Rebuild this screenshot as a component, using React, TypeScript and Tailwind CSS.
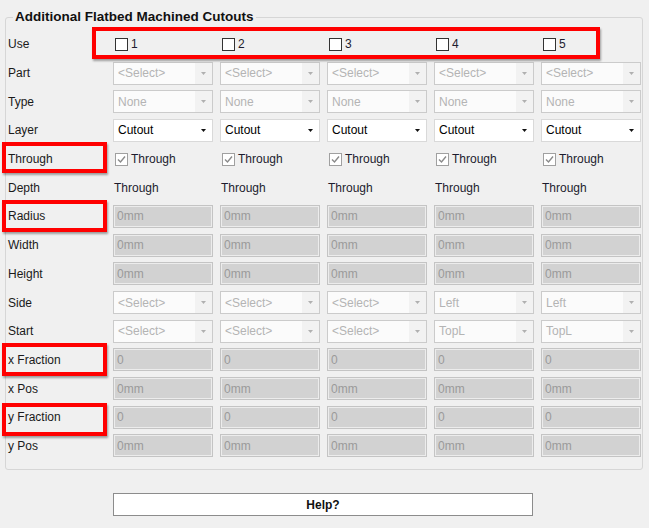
import React from "react";

type Cell =
  | { kind: "check"; text: string; checked?: boolean }
  | { kind: "combo"; text: string; enabled?: boolean }
  | { kind: "text"; text: string }
  | { kind: "box"; text: string };

type Row = { label: string; cells: Cell[] };

const five = (c: Cell): Cell[] => [c, c, c, c, c];

const rows: Row[] = [
  { label: "Use", cells: ["1", "2", "3", "4", "5"].map((n) => ({ kind: "check", text: n }) as Cell) },
  { label: "Part", cells: five({ kind: "combo", text: "<Select>" }) },
  { label: "Type", cells: five({ kind: "combo", text: "None" }) },
  { label: "Layer", cells: five({ kind: "combo", text: "Cutout", enabled: true }) },
  { label: "Through", cells: five({ kind: "check", text: "Through", checked: true }) },
  { label: "Depth", cells: five({ kind: "text", text: "Through" }) },
  { label: "Radius", cells: five({ kind: "box", text: "0mm" }) },
  { label: "Width", cells: five({ kind: "box", text: "0mm" }) },
  { label: "Height", cells: five({ kind: "box", text: "0mm" }) },
  {
    label: "Side",
    cells: ["<Select>", "<Select>", "<Select>", "Left", "Left"].map((t) => ({ kind: "combo", text: t }) as Cell),
  },
  {
    label: "Start",
    cells: ["<Select>", "<Select>", "<Select>", "TopL", "TopL"].map((t) => ({ kind: "combo", text: t }) as Cell),
  },
  { label: "x Fraction", cells: five({ kind: "box", text: "0" }) },
  { label: "x Pos", cells: five({ kind: "box", text: "0mm" }) },
  { label: "y Fraction", cells: five({ kind: "box", text: "0" }) },
  { label: "y Pos", cells: five({ kind: "box", text: "0mm" }) },
];

function CheckBox({ checked }: { checked?: boolean }) {
  return (
    <span
      className={`flex h-[13px] w-[13px] items-center justify-center border bg-white ${
        checked ? "border-[#a0a0a0]" : "border-[#333333]"
      }`}
    >
      {checked && (
        <svg width="9" height="9" viewBox="0 0 9 9">
          <path d="M1 4.5 L3.5 7 L8 1.5" fill="none" stroke="#8a8a8a" strokeWidth="1.4" />
        </svg>
      )}
    </span>
  );
}

function CellView({ cell }: { cell: Cell }) {
  if (cell.kind === "check") {
    return (
      <div className="flex items-center gap-[3px] pl-[2px] text-[#1c1c2e]">
        <CheckBox checked={cell.checked} />
        <span>{cell.text}</span>
      </div>
    );
  }
  if (cell.kind === "text") {
    return <div className="pl-[1px] text-[#1c1c2e]">{cell.text}</div>;
  }
  if (cell.kind === "combo") {
    return (
      <div
        className={`flex h-[23px] w-[100px] items-stretch border ${
          cell.enabled ? "border-[#d9d9d9] bg-white" : "border-[#cbcbcb] bg-[#fbfbfb]"
        }`}
      >
        <span
          className={`flex flex-1 items-center pl-[4px] ${cell.enabled ? "text-black" : "text-[#b4b4b4]"}`}
        >
          {cell.text}
        </span>
        <span
          className={`flex w-[17px] items-center justify-center ${cell.enabled ? "bg-white" : "bg-[#f2f2f2]"}`}
        >
          <svg width="5" height="3" viewBox="0 0 5 3">
            <path d="M0 0 H5 L2.5 3 Z" fill={cell.enabled ? "#111111" : "#b0b0b0"} />
          </svg>
        </span>
      </div>
    );
  }
  return (
    <div className="flex h-[23px] w-[100px] items-center border border-[#c4c4c4] bg-[#d2d2d2] pl-[3px] text-[#9a9a9a] shadow-[inset_1px_1px_0_#ececec,inset_-1px_-1px_0_#ececec]">
      {cell.text}
    </div>
  );
}

function RedMark({ className }: { className: string }) {
  return (
    <div
      className={`absolute border-[4px] border-[#ff0000] shadow-[1px_2px_2px_rgba(0,0,0,0.35)] ${className}`}
    />
  );
}

export default function App() {
  return (
    <div
      className="relative h-[528px] w-[649px] overflow-hidden bg-[#f0f0f0] text-[12px] leading-none text-black"
      style={{ fontFamily: '"Liberation Sans", Arial, sans-serif' }}
    >
      <div className="pl-[5px] pt-[17px]">
        <div className="relative h-[453px] w-[638px] rounded-[3px] border border-[#d6d6d6]">
          <span className="absolute left-[7px] top-[-8px] bg-[#f0f0f0] px-[2px] text-[13.5px] font-bold text-[#111]">
            Additional Flatbed Machined Cutouts
          </span>
          <div className="pl-[2px] pt-[12px]">
            {rows.map((row) => (
              <div
                key={row.label}
                className="grid h-[28.7px] grid-cols-[98px_repeat(5,100px)] items-center gap-x-[7px]"
              >
                <span className="text-[#1a1a1a]">{row.label}</span>
                {row.cells.map((cell, i) => (
                  <CellView key={i} cell={cell} />
                ))}
              </div>
            ))}
          </div>
        </div>
      </div>

      <div className="flex pl-[113px] pt-[23px]">
        <button className="h-[23px] w-[420px] border border-[#8c8c8c] bg-white text-[12px] font-bold text-[#111] shadow-[inset_1px_1px_0_#ffffff]">
          Help?
        </button>
      </div>

      <RedMark className="left-[92px] top-[27px] h-[32px] w-[508px]" />
      <RedMark className="left-[2px] top-[142px] h-[31px] w-[105px]" />
      <RedMark className="left-[2px] top-[200px] h-[32px] w-[105px]" />
      <RedMark className="left-[2px] top-[343px] h-[33px] w-[105px]" />
      <RedMark className="left-[2px] top-[403px] h-[33px] w-[105px]" />
    </div>
  );
}
